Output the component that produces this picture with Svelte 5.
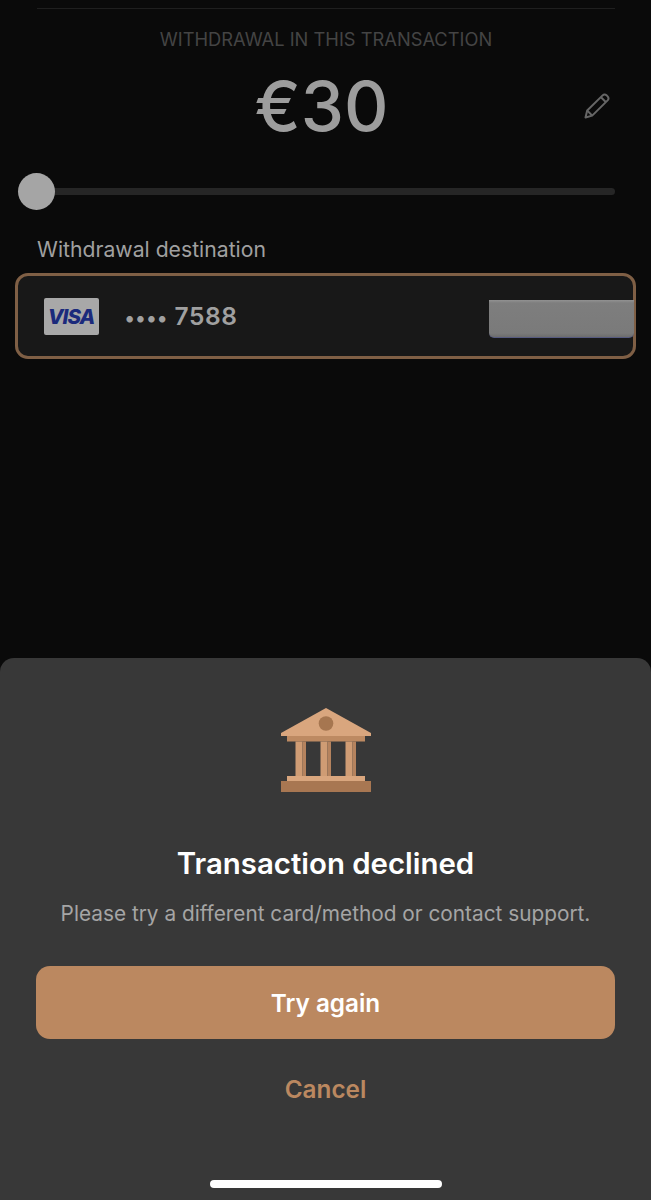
<script lang="ts">
  let amount = $state(30);
  let last4 = "7588";
</script>

<div class="page">
  <div class="content">
    <div class="divider"></div>
    <div class="label">WITHDRAWAL IN THIS TRANSACTION</div>
    <div class="amount-row">
      <span></span>
      <span class="amount">€{amount}</span>
      <svg class="pencil" width="26" height="26" viewBox="0 0 26 26" fill="none" stroke="#666" stroke-width="2" stroke-linejoin="round">
        <path d="M1.5 24.5 L3.2 17.5 L18.6 2.4 Q20.6 0.6 22.8 2.6 L23.6 3.4 Q25.4 5.4 23.6 7.4 L8.2 22.6 Z" />
        <path d="M17 4.2 L22 9.2" />
        <path d="M3.2 17.5 L8.2 22.6" />
      </svg>
    </div>
    <div class="slider">
      <div class="thumb"></div>
    </div>
    <div class="dest-label">Withdrawal destination</div>
  </div>

  <div class="card">
    <div class="visa"><span>VISA</span></div>
    <div class="number"><span class="dots">••••</span> {last4}</div>
    <div class="redacted"></div>
  </div>

  <div class="sheet">
    <svg class="bank" width="90" height="84" viewBox="0 0 90 84">
      <path d="M0 25 L45 0 L90 25 V28 H0 Z" fill="#d9a67e" />
      <circle cx="45" cy="15.5" r="7.3" fill="#a67650" />
      <rect x="6" y="28" width="78" height="5.5" fill="#bd8a62" />
      <rect x="14.5" y="33.5" width="7" height="34.5" fill="#cf9c74" />
      <rect x="21.5" y="33.5" width="3.5" height="34.5" fill="#b5835e" />
      <rect x="39.5" y="33.5" width="7" height="34.5" fill="#cf9c74" />
      <rect x="46.5" y="33.5" width="3.5" height="34.5" fill="#b5835e" />
      <rect x="64.5" y="33.5" width="7" height="34.5" fill="#cf9c74" />
      <rect x="71.5" y="33.5" width="3.5" height="34.5" fill="#b5835e" />
      <rect x="6" y="68" width="78" height="5" fill="#d9a67e" />
      <rect x="0" y="73" width="90" height="11" fill="#a87752" />
    </svg>
    <h1>Transaction declined</h1>
    <p>Please try a different card/method or contact support.</p>
    <button class="primary">Try again</button>
    <button class="cancel">Cancel</button>
    <div class="home-bar"></div>
  </div>
</div>

<style>
  :global(body) {
    background: #0a0a0a;
    font-family: Inter, "Liberation Sans", sans-serif;
  }

  .page {
    height: 1200px;
    display: flex;
    flex-direction: column;
    background: #0a0a0a;
    overflow: hidden;
  }

  .content {
    padding: 8px 36px 0 37px;
  }

  .divider {
    height: 1px;
    background: #1f1f1f;
  }

  .label {
    margin-top: 20px;
    text-align: center;
    font-size: 18.3px;
    line-height: 20px;
    color: #444;
    white-space: nowrap;
  }

  .amount-row {
    margin-top: 21px;
    height: 72px;
    display: grid;
    grid-template-columns: 1fr auto 1fr;
    align-items: center;
  }

  .amount {
    padding-right: 9px;
    font-size: 69px;
    font-weight: 500;
    line-height: 72px;
    color: #9d9d9d;
  }

  .pencil {
    justify-self: end;
    margin-right: 5px;
  }

  .slider {
    margin-top: 46px;
    height: 7px;
    background: #262626;
    border-radius: 4px;
    display: flex;
    align-items: center;
  }

  .thumb {
    width: 37px;
    height: 37px;
    flex: none;
    margin-left: -19px;
    border-radius: 50%;
    background: #a5a5a5;
  }

  .dest-label {
    margin-top: 41px;
    font-size: 21.2px;
    line-height: 26px;
    color: #a0a0a0;
    white-space: nowrap;
  }

  .card {
    margin: 11px 15px 0 15px;
    height: 86px;
    box-sizing: border-box;
    border: 3px solid #7f5f45;
    border-radius: 13px;
    background: #181818;
    display: flex;
    align-items: center;
    padding-left: 25.5px;
  }

  .visa {
    width: 55px;
    height: 37px;
    flex: none;
    border-radius: 2px;
    background: #a8a8a8;
    display: flex;
    align-items: center;
    justify-content: center;
  }

  .visa span {
    font-size: 20.5px;
    font-weight: 800;
    font-style: italic;
    letter-spacing: -1px;
    color: #1b2a7c;
  }

  .number {
    margin-left: 26px;
    font-size: 24.5px;
    font-weight: 600;
    letter-spacing: 0.6px;
    color: #a0a0a0;
    white-space: nowrap;
  }

  .dots {
    font-size: 20.5px;
    letter-spacing: 0.5px;
  }

  .redacted {
    margin-left: auto;
    margin-right: -1px;
    width: 145px;
    height: 38px;
    margin-top: 5px;
    background: linear-gradient(180deg, #929292 0, #7e7e7e 8%, #7a7a7a 90%, #6c6c6c 100%);
    border-bottom: 1px solid #565a80;
    border-radius: 0 0 5px 5px;
    box-sizing: border-box;
  }

  .sheet {
    margin-top: auto;
    height: 542px;
    box-sizing: border-box;
    background: #383838;
    border-radius: 14px 14px 0 0;
    padding-top: 50px;
    display: flex;
    flex-direction: column;
    align-items: center;
  }

  .bank {
    flex: none;
  }

  h1 {
    margin: 52px 0 0;
    font-size: 29.4px;
    line-height: 40px;
    font-weight: 600;
    color: #fff;
    white-space: nowrap;
  }

  p {
    margin: 16px 0 0;
    font-size: 20.8px;
    line-height: 28px;
    color: #a5a5a5;
    white-space: nowrap;
  }

  button {
    border: none;
    font-family: inherit;
    font-size: 24.3px;
    font-weight: 600;
    cursor: pointer;
  }

  .primary {
    margin-top: 38px;
    width: 579px;
    height: 73px;
    flex: none;
    border-radius: 14px;
    background: #bb8860;
    color: #fff;
  }

  .cancel {
    margin-top: 34px;
    height: 32px;
    padding: 0;
    background: none;
    color: #bb8860;
  }

  .home-bar {
    margin-top: auto;
    margin-bottom: 12px;
    width: 232px;
    height: 8px;
    border-radius: 4px;
    background: #fff;
  }
</style>
